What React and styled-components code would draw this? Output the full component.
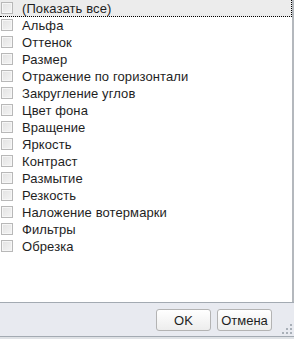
import styled, { createGlobalStyle } from "styled-components";

const GlobalStyle = createGlobalStyle`
  html, body {
    margin: 0;
    padding: 0;
    background: #fff;
  }
`;

const items = [
  "(Показать все)",
  "Альфа",
  "Оттенок",
  "Размер",
  "Отражение по горизонтали",
  "Закругление углов",
  "Цвет фона",
  "Вращение",
  "Яркость",
  "Контраст",
  "Размытие",
  "Резкость",
  "Наложение вотермарки",
  "Фильтры",
  "Обрезка",
];

const App = () => {
  return (
    <Wrapper>
      <GlobalStyle />
      <List>
        {items.map((label, i) => (
          <Row key={label} focused={i === 0}>
            <Box />
            <Label>{label}</Label>
          </Row>
        ))}
      </List>
      <Footer>
        <Button>OK</Button>
        <Button>Отмена</Button>
        <Grip>
          <svg width="10" height="10" viewBox="0 0 10 10">
            <rect x="8" y="0" width="2" height="2" fill="#a9b0b8" />
            <rect x="4" y="4" width="2" height="2" fill="#a9b0b8" />
            <rect x="8" y="4" width="2" height="2" fill="#a9b0b8" />
            <rect x="0" y="8" width="2" height="2" fill="#a9b0b8" />
            <rect x="4" y="8" width="2" height="2" fill="#a9b0b8" />
            <rect x="8" y="8" width="2" height="2" fill="#a9b0b8" />
          </svg>
        </Grip>
      </Footer>
    </Wrapper>
  );
};

const Wrapper = styled.div`
  width: 294px;
  height: 339px;
  display: flex;
  flex-direction: column;
  font-family: "Liberation Sans", Arial, sans-serif;
  font-size: 13px;
  color: #1e1e1e;
  background: #dfe2e6;
`;

const List = styled.div`
  height: 302px;
  background: #fff;
  border-right: 2px solid #b4b8bd;
  width: 294px;
  box-sizing: border-box;
  display: flex;
  flex-direction: column;
`;

const Row = styled.div`
  height: 17px;
  display: flex;
  align-items: center;
  box-sizing: border-box;
  background: ${({ focused }) => (focused ? "#ececec" : "transparent")};
  border-bottom: 1px dotted ${({ focused }) => (focused ? "#000" : "transparent")};
  border-right: 1px dotted ${({ focused }) => (focused ? "#000" : "transparent")};
`;

const Box = styled.span`
  width: 12px;
  height: 12px;
  margin-left: 1px;
  box-sizing: border-box;
  border: 1px solid #b8b8b8;
  background: linear-gradient(135deg, #e2e2e2, #f4f4f4);
  box-shadow: inset 0 0 0 1px #f6f6f6;
  flex-shrink: 0;
`;

const Label = styled.span`
  margin-left: 9px;
  white-space: nowrap;
  letter-spacing: 0.1px;
`;

const Footer = styled.div`
  height: 35px;
  box-sizing: border-box;
  background: #e8eaf0;
  border-top: 1px solid #a3aab2;
  border-bottom: 1px solid #a3aab2;
  display: flex;
  align-items: center;
  justify-content: flex-end;
  gap: 6px;
  padding-right: 22px;
  position: relative;
`;

const Button = styled.button`
  width: 55px;
  height: 22px;
  margin-top: 1px;
  box-sizing: border-box;
  border: 1px solid #b3b3b3;
  border-radius: 3px;
  background: linear-gradient(#ffffff, #ededed);
  font-family: "Liberation Sans", Arial, sans-serif;
  font-size: 13px;
  color: #1e1e1e;
  padding: 0;
`;

const Grip = styled.div`
  position: absolute;
  right: 2px;
  bottom: 2px;
  width: 10px;
  height: 10px;
  line-height: 0;
`;

export default App;
